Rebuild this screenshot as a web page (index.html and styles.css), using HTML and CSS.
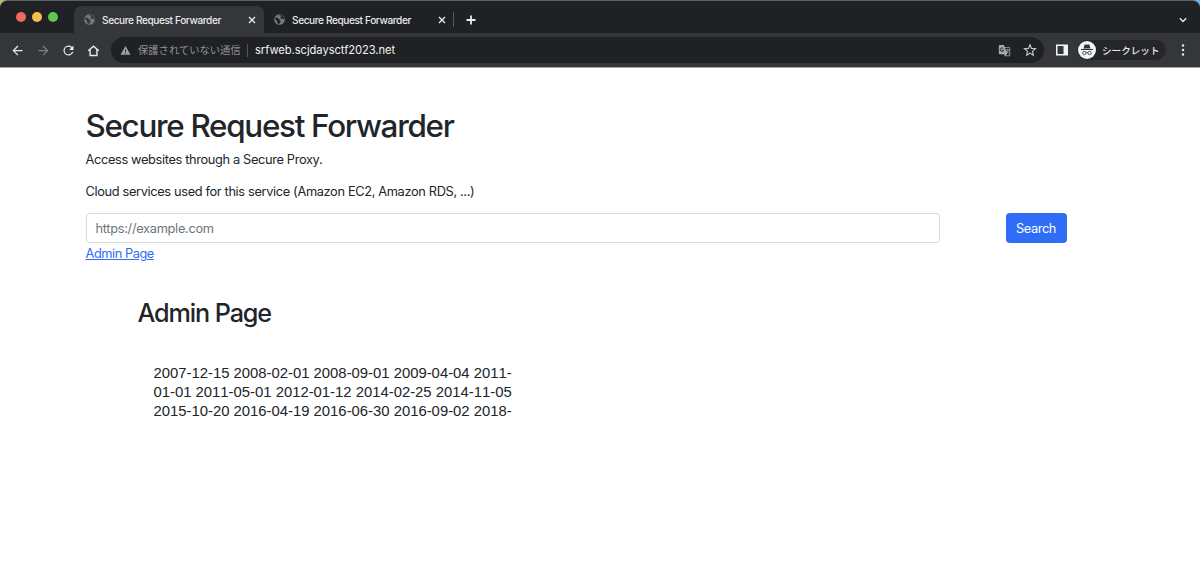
FILE: index.html
```html
<!DOCTYPE html>
<html lang="en">
<head>
    <meta charset="UTF-8">
    <meta name="viewport" content="width=device-width, initial-scale=1.0">
    <title>Secure Request Forwarder</title>
    <link rel="stylesheet" href="styles.css">
</head>
<body>
    <div class="desktop">
        <div class="browser">
            <div class="tab-bar">
                <div class="lights">
                    <span class="light red"></span>
                    <span class="light yellow"></span>
                    <span class="light green"></span>
                </div>
                <div class="tab active">
                    <svg class="globe" viewBox="0 0 24 24"><circle cx="12" cy="12" r="11.5" fill="#75787c"/><path d="M3 8c4-1 6 2 8 3s1 3 3 4-1 3-2 6c-2 1-4 0-5-2s1-3-1-5-5-2-3-6zM12 2c-1 2 1 3 3 3s1 3-1 4 3 2 5 1 2 3 4 2c0-5-4-10-11-10z" fill="#35363a"/></svg>
                    <span class="tab-title">Secure Request Forwarder</span>
                    <svg class="close" viewBox="0 0 8 8"><path d="M1 1l6 6M7 1L1 7"/></svg>
                </div>
                <div class="tab">
                    <svg class="globe" viewBox="0 0 24 24"><circle cx="12" cy="12" r="11.5" fill="#75787c"/><path d="M3 8c4-1 6 2 8 3s1 3 3 4-1 3-2 6c-2 1-4 0-5-2s1-3-1-5-5-2-3-6zM12 2c-1 2 1 3 3 3s1 3-1 4 3 2 5 1 2 3 4 2c0-5-4-10-11-10z" fill="#202124"/></svg>
                    <span class="tab-title">Secure Request Forwarder</span>
                    <svg class="close" viewBox="0 0 8 8"><path d="M1 1l6 6M7 1L1 7"/></svg>
                </div>
                <svg class="new-tab" viewBox="0 0 10 10"><path d="M5 .5v9M.5 5h9"/></svg>
                <svg class="tab-menu" viewBox="0 0 8 6"><path d="M.8 1.2L4 4.400l3.200-3.200"/></svg>
            </div>
            <div class="toolbar">
                <svg class="nav" viewBox="0 0 24 24"><path d="M20 11H7.8l5.6-5.6L12 4l-8 8 8 8 1.4-1.4L7.8 13H20z"/></svg>
                <svg class="nav off" viewBox="0 0 24 24"><path d="M4 11h12.2l-5.6-5.6L12 4l8 8-8 8-1.4-1.4 5.6-5.6H4z"/></svg>
                <svg class="nav" viewBox="0 0 24 24"><path d="M17.65 6.35A8 8 0 1 0 19.73 14h-2.08A6 6 0 1 1 12 6c1.66 0 3.14.69 4.22 1.78L13 11h7V4z"/></svg>
                <svg class="nav home" viewBox="0 0 24 24"><path d="M6.500 10V20h11V10M3.500 12.500L12 5l8.500 7.500"/></svg>
                <div class="address">
                    <svg class="warning" viewBox="0 0 24 24"><path d="M1 21.500h22L12 2zM11 10h2v5h-2zM11 17h2v2h-2z" fill="#9aa0a6" fill-rule="evenodd"/></svg>
                    <span class="insecure">保護されていない通信</span>
                    <span class="divider"></span>
                    <span class="url">srfweb.scjdaysctf2023.net</span>
                    <svg class="translate" viewBox="0 0 24 24"><path d="M2 2h9l1.500 4H21q1.500 0 1.500 1.500V21q0 1.500-1.500 1.500h-8.500L11.500 19H3q-1.500 0-1.500-1.500V3.500Q1.500 2 3 2z" fill="#a5a8ac"/><path d="M13 7.500h8V21h-6.500l2.500-3z" fill="#202124"/><path d="M10 8.500a3.300 3.300 0 1 0 .5 3H7.500" fill="none" stroke="#202124" stroke-width="1.700"/><path d="M14 11h7M17.500 9v2m2 0q-1 4-5 6m1-4q1 3 4 4" fill="none" stroke="#bdc1c6" stroke-width="1.300"/></svg>
                    <svg class="star" viewBox="0 0 24 24"><path d="M12 3l2.600 6.300 6.800.6-5.200 4.400 1.600 6.700-5.800-3.600L6.200 21l1.600-6.700-5.200-4.400 6.800-.6z"/></svg>
                </div>
                <svg class="panel" viewBox="0 0 12 12"><path d="M0 .5h12v11H0zM1.500 2v8h6V2z" fill="#f1f3f4" fill-rule="evenodd"/></svg>
                <div class="profile">
                    <svg class="incognito" viewBox="0 0 18 18"><circle cx="9" cy="9" r="9" fill="#f1f3f4"/><path d="M5.600 7.500l1-3.700q.2-.6.900-.4l1.500.4 1.500-.4q.7-.2.9.4l1 3.700zM3 8h12v1H3z" fill="#303134"/><g fill="none" stroke="#303134" stroke-width=".8"><circle cx="6.400" cy="12" r="1.700"/><circle cx="11.600" cy="12" r="1.700"/><path d="M8.100 11.700q.9-.6 1.800 0"/></g></svg>
                    <span>シークレット</span>
                </div>
                <svg class="more" viewBox="0 0 4 12"><circle cx="2" cy="1.500" r="1.200"/><circle cx="2" cy="6" r="1.200"/><circle cx="2" cy="10.500" r="1.200"/></svg>
            </div>
        </div>
    </div>
    <div class="container">
        <h1>Secure Request Forwarder</h1>
        <p class="lead">Access websites through a Secure Proxy.</p>
        <p class="services">Cloud services used for this service (Amazon EC2, Amazon RDS, ...)</p>
        <form class="search-form">
            <input type="text" placeholder="https://example.com">
            <button type="button">Search</button>
        </form>
        <a class="admin-link" href="#">Admin Page</a>
        <div class="result">
            <h2>Admin Page</h2>
            <div class="dates">2007-12-15 2008-02-01 2008-09-01 2009-04-04 2011-<br>01-01 2011-05-01 2012-01-12 2014-02-25 2014-11-05<br>2015-10-20 2016-04-19 2016-06-30 2016-09-02 2018-</div>
        </div>
    </div>
</body>
</html>
```
FILE: styles.css
```css
* {
    box-sizing: border-box;
}

body {
    margin: 0;
    height: 564px;
    overflow: hidden;
    background-color: #fff;
    color: #212529;
    font-family: Inter, "Liberation Sans", sans-serif;
    font-size: 12.8px;
    letter-spacing: -0.35px;
}

svg {
    display: block;
    flex-shrink: 0;
}

/* Browser window */
.desktop {
    background: linear-gradient(90deg, #b9b96c 50%, #69b4dc 50%);
}

.browser {
    height: 68px;
    background-color: #35363a;
    border-top: 1px solid #5f6265;
    border-bottom: 1px solid #a5a6a8;
    border-radius: 8px 8px 0 0;
    overflow: hidden;
    letter-spacing: 0;
}

.tab-bar {
    display: flex;
    align-items: center;
    height: 32px;
    padding: 5px 13px 0 16px;
    background-color: #202124;
}

.lights {
    display: flex;
    gap: 6px;
    width: 58px;
    margin-top: -5px;
}

.light {
    width: 10px;
    height: 10px;
    border-radius: 50%;
}

.red { background-color: #ed6a5e; }
.yellow { background-color: #f5bf4f; }
.green { background-color: #61c554; }

.tab {
    display: flex;
    align-items: center;
    width: 190px;
    height: 27px;
    padding: 0 8px 0 10px;
    color: #e8eaed;
}

.tab.active {
    background-color: #35363a;
    border-radius: 7px 7px 0 0;
}

.tab:not(.active) {
    background: linear-gradient(#55575b, #55575b) right 6px / 1px 15px no-repeat;
}

.globe {
    width: 11px;
    height: 11px;
    margin-right: 7px;
}

.tab-title {
    flex: 1;
    font-size: 10.1px;
    font-weight: 500;
    letter-spacing: -0.39px;
    white-space: nowrap;
}

.close {
    width: 8px;
    height: 8px;
}

.close path, .new-tab path, .tab-menu path {
    fill: none;
    stroke: #e8eaed;
    stroke-width: 1.4;
}

.new-tab {
    width: 10px;
    height: 10px;
    margin-left: 12px;
}

.new-tab path {
    stroke-width: 1.8;
}

.tab-menu {
    width: 8px;
    height: 6px;
    margin-left: auto;
}

.toolbar {
    display: flex;
    align-items: center;
    height: 34px;
    padding: 0 15px 0 10px;
}

.nav {
    width: 15px;
    height: 15px;
    margin-right: 10.5px;
    fill: #e8eaed;
}

.nav.off {
    fill: #7d7f83;
}

.nav.home {
    margin-left: -1px;
    margin-right: 11.5px;
    fill: none;
    stroke: #e8eaed;
    stroke-width: 2.2;
}

.address {
    display: flex;
    align-items: center;
    width: 933px;
    height: 26px;
    padding: 0 7px 0 9px;
    margin-left: -1px;
    border-radius: 13px;
    background-color: #202124;
}

.warning {
    width: 11px;
    height: 11px;
    margin-right: 7px;
}

.insecure {
    width: 103px;
    color: #8f9398;
    font-family: "Noto Sans CJK JP", sans-serif;
    font-size: 10.3px;
    line-height: 14px;
    margin-top: -1px;
    white-space: nowrap;
}

.divider {
    width: 1px;
    height: 13px;
    margin: 0 7px 0 6px;
    background-color: #55575b;
}

.url {
    flex: 1;
    color: #f1f3f4;
    font-size: 11.2px;
    letter-spacing: -0.06px;
}

.translate {
    width: 13px;
    height: 13px;
    margin-right: 12px;
}

.star {
    width: 14px;
    height: 14px;
    fill: none;
    stroke: #c4c7ca;
    stroke-width: 1.9;
}

.panel {
    width: 12px;
    height: 12px;
    margin: 0 9px 0 12px;
}

.profile {
    display: flex;
    align-items: center;
    gap: 6px;
    width: 89px;
    height: 20px;
    padding-left: 1px;
    border-radius: 10px;
    background-color: #252629;
    color: #e8eaed;
    font-family: "Noto Sans CJK JP", sans-serif;
    font-size: 9.6px;
    font-weight: 500;
    line-height: 14px;
    white-space: nowrap;
}

.profile span {
    margin-top: -1px;
}

.incognito {
    width: 18px;
    height: 18px;
}

.more {
    width: 4px;
    height: 12px;
    margin-left: auto;
    fill: #e8eaed;
}

/* Page content */
.container {
    width: 1029px;
    margin: 0 auto;
    padding-top: 39px;
}

h1, h2, p {
    margin: 0;
    white-space: nowrap;
}

h1 {
    height: 44px;
    line-height: 38px;
    font-size: 31.4px;
    font-weight: 500;
    letter-spacing: -1.3px;
}

.lead, .services {
    height: 32px;
    line-height: 19px;
    margin-top: -1px;
}

.services {
    margin-top: 0;
    height: 31px;
}

.search-form {
    display: flex;
    gap: 66px;
    height: 30px;
    margin-bottom: 1px;
}

input {
    width: 854px;
    padding: 0 9px;
    border: 1px solid #d8dbdf;
    border-radius: 4px;
    font: inherit;
    letter-spacing: -0.3px;
}

input::placeholder {
    color: #6c757d;
}

button {
    width: 61px;
    padding: 0;
    border: none;
    border-radius: 4px;
    background-color: #2f6df6;
    color: #fff;
    font: inherit;
    letter-spacing: -0.4px;
}

.admin-link {
    display: inline-block;
    line-height: 19px;
    letter-spacing: -0.45px;
    color: #2f6df6;
}

.result {
    padding: 34px 52px;
}

h2 {
    line-height: 32px;
    font-size: 25.2px;
    font-weight: 500;
    letter-spacing: -1.1px;
}

.dates {
    padding: 35px 16px;
    font-family: "Liberation Sans", Arial, sans-serif;
    font-size: 14.85px;
    font-kerning: none;
    letter-spacing: 0;
    line-height: 19px;
    white-space: nowrap;
}
```
